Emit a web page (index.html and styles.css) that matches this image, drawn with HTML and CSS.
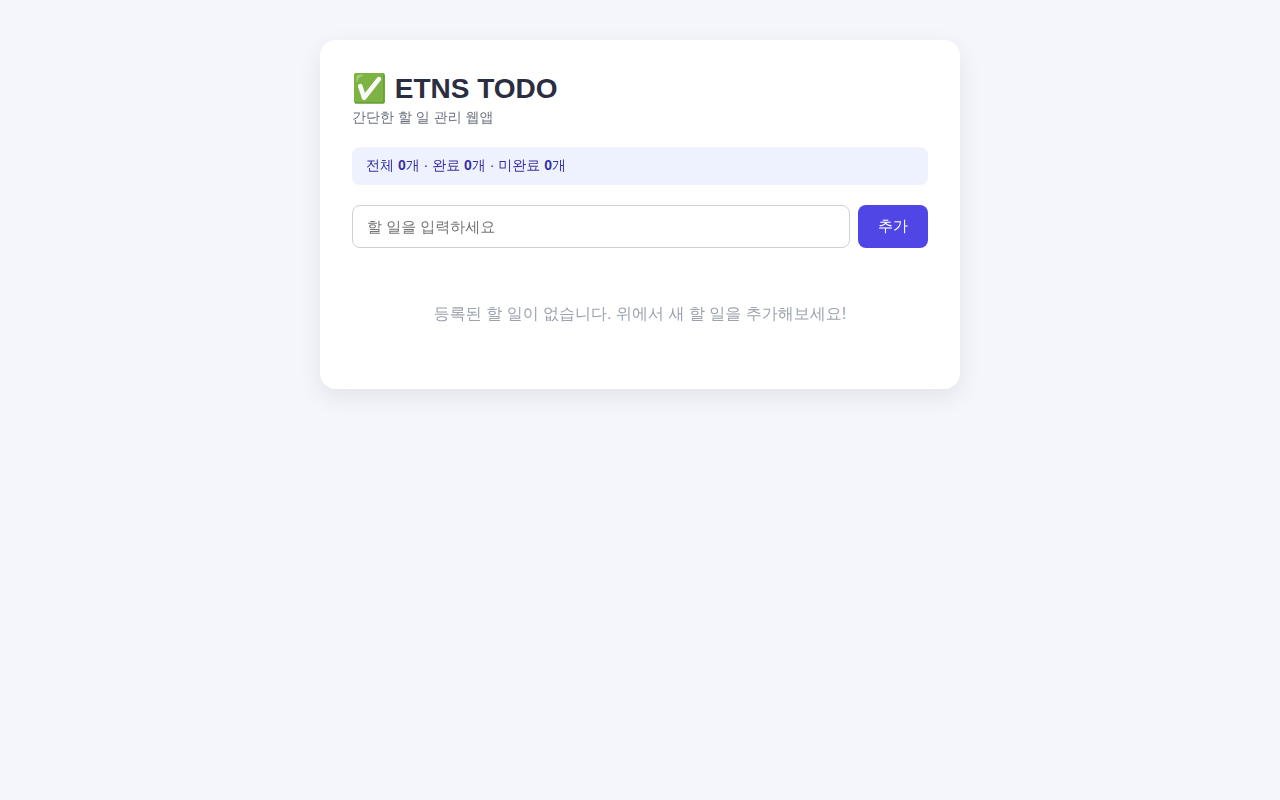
FILE: index.html
```
<!DOCTYPE html>
<html lang="ko">
<head>
  <meta charset="UTF-8">
  <meta name="viewport" content="width=device-width, initial-scale=1">
  <title>ETNS TODO</title>
  <link rel="stylesheet" href="styles.css">
</head>
<body>
  <main class="container">
    <header>
      <h1 class="title">✅ ETNS TODO</h1>
      <p class="subtitle">간단한 할 일 관리 웹앱</p>
    </header>
    <section class="stats">전체 <strong>0</strong>개 · 완료 <strong>0</strong>개 · 미완료 <strong>0</strong>개</section>
    <form class="add-form">
      <input class="add-input" type="text" placeholder="할 일을 입력하세요" aria-label="할 일">
      <button class="add-button" type="submit">추가</button>
    </form>
    <p class="empty">등록된 할 일이 없습니다. 위에서 새 할 일을 추가해보세요!</p>
  </main>
</body>
</html>
```

FILE: styles.css
```
* {
  box-sizing: border-box;
  margin: 0;
  padding: 0;
}

body {
  padding: 40px 16px;
  background: #f4f6fb;
  color: #2b2d42;
  font-family: "Liberation Sans", "WenQuanYi Zen Hei", "Noto Sans CJK KR", sans-serif;
}

.container {
  max-width: 640px;
  margin: 0 auto;
  padding: 32px;
  background: #fff;
  border-radius: 16px;
  box-shadow: 0 8px 24px rgba(0, 0, 0, 0.08);
}

.title {
  font-size: 28px;
}

.subtitle {
  margin-top: 4px;
  color: #6b7280;
  font-size: 14px;
}

.stats {
  margin: 20px 0;
  padding: 10px 14px;
  background: #eef2ff;
  border-radius: 8px;
  color: #3730a3;
  font-size: 14px;
}

.add-form {
  display: flex;
  gap: 8px;
  margin-bottom: 24px;
}

.add-input {
  flex: 1;
  min-width: 0;
  padding: 12px 14px;
  border: 1px solid #d0d0d5;
  border-radius: 8px;
  font-family: inherit;
  font-size: 15px;
}

.add-button {
  padding: 12px 20px;
  background: #4f46e5;
  border: none;
  border-radius: 8px;
  color: #fff;
  font-family: inherit;
  font-size: 15px;
  cursor: pointer;
}

.empty {
  padding: 32px 0;
  color: #9ca3af;
  text-align: center;
}
```
